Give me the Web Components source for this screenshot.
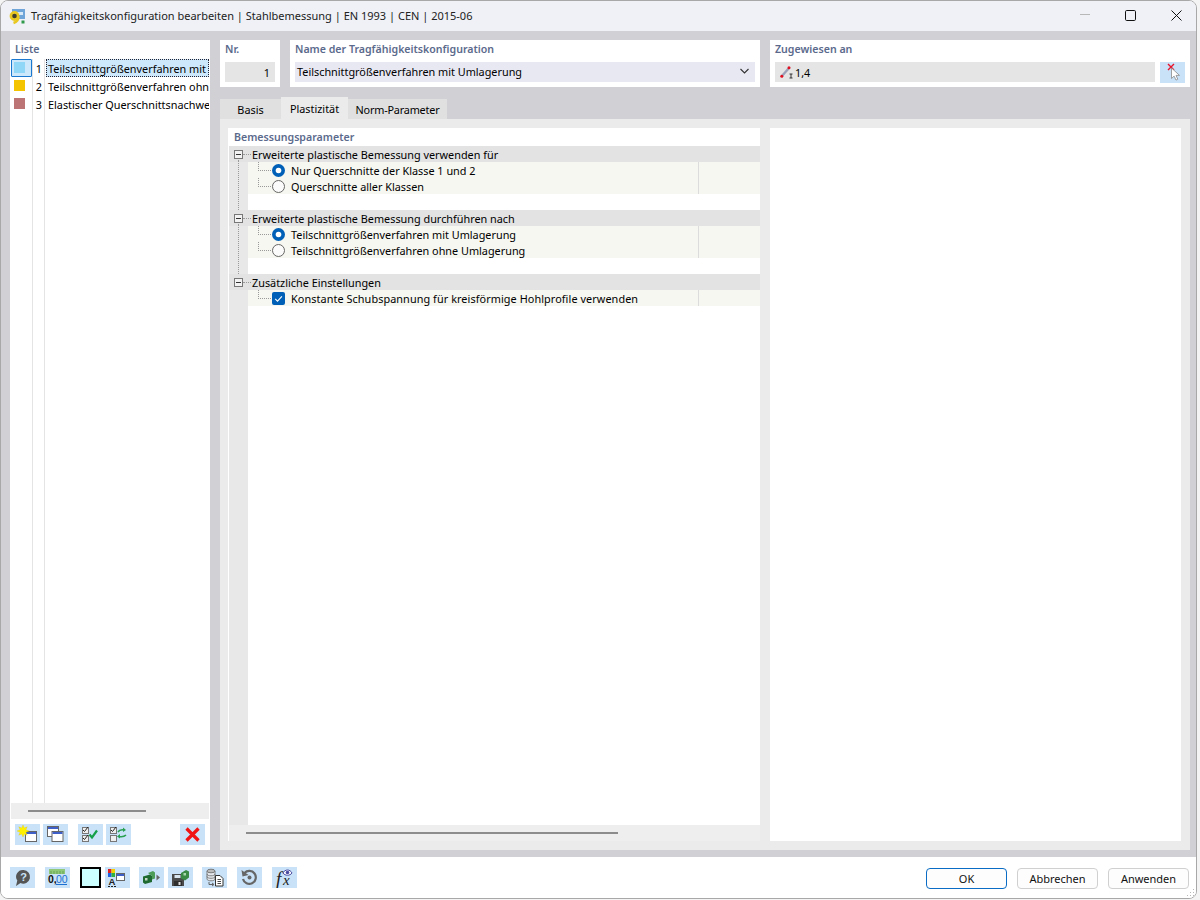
<!DOCTYPE html>
<html lang="de">
<head>
<meta charset="utf-8">
<title>Tragfähigkeitskonfiguration bearbeiten</title>
<style>
html, body { margin: 0; height: 100%; background: #f4f4f4; }
body { font: 10.85px "Noto Sans", "Open Sans", sans-serif; color: #000; }
</style>
</head>
<body>

<svg width="0" height="0" style="position:absolute">
  <defs>
    <g id="win"><rect x=".5" y=".5" width="11" height="10" fill="#fff" stroke="#666"/><rect x="1" y="1" width="10" height="2" fill="#3f5fc8"/></g>
    <g id="box"><rect x=".5" y=".5" width="6" height="6" fill="#eee" stroke="#777"/></g>
  </defs>
</svg>

<rs-dialog>
  <span slot="title">Tragfähigkeitskonfiguration bearbeiten | Stahlbemessung | EN 1993 | CEN | 2015-06</span>

  <rs-list-panel slot="list">
    <rs-list-row color="#8fd6f7" num="1" selected>Teilschnittgrößenverfahren mit Umlagerung</rs-list-row>
    <rs-list-row color="#f5c400" num="2">Teilschnittgrößenverfahren ohne Umlagerung</rs-list-row>
    <rs-list-row color="#bd7474" num="3">Elastischer Querschnittsnachweis</rs-list-row>

    <rs-icon-button slot="tools"><svg viewBox="0 0 25 21"><use href="#win" x="10" y="7"/><path d="M14 7L10.900 5.700L12.200 2.800L9.300 4L8 1L6.700 4L3.800 2.800L5.100 5.700L2 7L5.100 8.300L3.800 11.200L6.700 10L8 13L9.300 10L12.200 11.200L10.900 8.300Z" fill="#fff200" stroke="#e0c000" stroke-width=".3"/></svg></rs-icon-button>
    <rs-icon-button slot="tools"><svg viewBox="0 0 25 21"><use href="#win" x="4" y="2"/><use href="#win" x="8.500" y="7"/></svg></rs-icon-button>
    <rs-icon-button slot="tools" gap><svg viewBox="0 0 25 21"><use href="#box" x="4" y="3"/><use href="#box" x="4" y="11"/><path d="M5 6l1.500 1.500L10 3M5 14l1.500 1.500L10 11" fill="none" stroke="#222" stroke-width="1"/><path d="M11.500 10.500l2.500 3 5-7" fill="none" stroke="#17a04a" stroke-width="2.200"/></svg></rs-icon-button>
    <rs-icon-button slot="tools"><svg viewBox="0 0 25 21"><use href="#box" x="4" y="3"/><use href="#box" x="4" y="11"/><path d="M5 6l1.500 1.500L10 3" fill="none" stroke="#222" stroke-width="1"/><path d="M12 8c1.500-2.500 3.500-2.500 6-2M20 11c-2 2-4 2-7 1.500" fill="none" stroke="#28a050" stroke-width="1.600"/><path d="M17 3.500l3 2.500-3 2zM14 10l-3 2.500 3 2z" fill="#28a050"/></svg></rs-icon-button>
    <rs-icon-button slot="tools" push><svg viewBox="0 0 25 21"><path d="M6.500 4.500l12 12M18.500 4.500l-12 12" stroke="#f01414" stroke-width="3.200" fill="none"/></svg></rs-icon-button>
  </rs-list-panel>

  <rs-field slot="head" label="Nr." style="width:60px"><rs-input align="right">1</rs-input></rs-field>
  <rs-field slot="head" label="Name der Tragfähigkeitskonfiguration" style="width:470px"><rs-input tone="#e8e8f3" caret style="padding-bottom:2px">Teilschnittgrößenverfahren mit Umlagerung</rs-input></rs-field>
  <rs-field slot="head" label="Zugewiesen an" style="flex:1">
    <rs-input style="flex:1">
      <svg slot="icon" width="14" height="14" viewBox="0 0 14 14" style="margin-left:3px"><path d="M1.500 11.500L9 3" stroke="#9aa0b8" stroke-width="2.400"/><circle cx="1.800" cy="11.200" r="1.500" fill="#e01020"/><circle cx="9" cy="2.800" r="1.500" fill="#e01020"/><path d="M9.500 9h3M11 9v4M9.500 13h3" stroke="#222" stroke-width=".9"/></svg>
      1,4
    </rs-input>
    <rs-icon-button style="margin-left:5px"><svg viewBox="0 0 25 21"><path d="M8 2l6 6M14 2L8 8" stroke="#e8122a" stroke-width="1.400"/><path d="M11.500 6v10.500l2.600-2.400 1.900 4 1.800-.9-1.800-3.800h3.500z" fill="#fff" stroke="#8a8a8a" stroke-width=".8"/></svg></rs-icon-button>
  </rs-field>

  <rs-tabs slot="tabs">
    <rs-tab style="width:61px">Basis</rs-tab>
    <rs-tab style="width:67px" active>Plastizität</rs-tab>
    <rs-tab style="width:99px;letter-spacing:-.2px">Norm-Parameter</rs-tab>
  </rs-tabs>

  <rs-tree-pane slot="left" label="Bemessungsparameter">
    <rs-tree-group label="Erweiterte plastische Bemessung verwenden für" line>
      <rs-tree-row kind="radio" checked>Nur Querschnitte der Klasse 1 und 2</rs-tree-row>
      <rs-tree-row kind="radio" last>Querschnitte aller Klassen</rs-tree-row>
    </rs-tree-group>
    <rs-tree-group label="Erweiterte plastische Bemessung durchführen nach" line>
      <rs-tree-row kind="radio" checked>Teilschnittgrößenverfahren mit Umlagerung</rs-tree-row>
      <rs-tree-row kind="radio" last>Teilschnittgrößenverfahren ohne Umlagerung</rs-tree-row>
    </rs-tree-group>
    <rs-tree-group label="Zusätzliche Einstellungen">
      <rs-tree-row kind="check" checked last style="letter-spacing:.08px">Konstante Schubspannung für kreisförmige Hohlprofile verwenden</rs-tree-row>
    </rs-tree-group>
  </rs-tree-pane>

  <rs-icon-button slot="footer"><svg viewBox="0 0 25 21"><path d="M13.500 3a6.800 6.800 0 1 1-3 13l-4.500 3 1.300-5.400A6.800 6.800 0 0 1 13.500 3z" fill="#555"/><text x="13.500" y="14" font-family="Liberation Sans" font-weight="700" font-size="11" text-anchor="middle" fill="#c9e2f7">?</text></svg></rs-icon-button>
  <rs-icon-button slot="footer" style="margin-left:10px"><svg viewBox="0 0 25 21"><rect x="4" y="2" width="16" height="5" fill="#8fc878"/><path d="M6 4v3M9 4v3M12 4v3M15 4v3M18 4v3" stroke="#5d9a4c" stroke-width=".8"/><text x="3" y="16" font-family="Liberation Sans" font-size="10.500" font-weight="700" fill="#111">0,</text><text x="11" y="16" font-family="Liberation Sans" font-size="10.500" fill="#1a6fd0">00</text><path d="M11 17.500h11" stroke="#1a6fd0"/></svg></rs-icon-button>
  <rs-swatch slot="footer"></rs-swatch>
  <rs-icon-button slot="footer" style="margin-left:4px"><svg viewBox="0 0 25 21"><rect x="3" y="2" width="3.500" height="4" fill="#e02020"/><rect x="6.500" y="2" width="3.500" height="4" fill="#f0d000"/><rect x="3" y="6" width="3.500" height="4" fill="#2060e0"/><rect x="6.500" y="6" width="3.500" height="4" fill="#30b040"/><rect x="11.500" y="6.500" width="8" height="7" fill="#fff" stroke="#666"/><rect x="12" y="7" width="7" height="2" fill="#3f5fc8"/><text x="7" y="17.500" font-family="Liberation Sans" font-weight="700" font-size="9.500" text-anchor="middle" fill="#222">A</text><path d="M3 19.500h2M6 19.500h2M9 19.500h2" stroke="#222"/></svg></rs-icon-button>
  <rs-icon-button slot="footer" style="margin-left:9px"><svg viewBox="0 0 25 21"><path d="M4 9.500l7-2 2 1.500v6l-7 2-2-1.500z" fill="#1f6a30"/><path d="M9 6l5-2 2 1.500v6l-3 1V9l-2-1.500z" fill="#4d9c58"/><path d="M6 11h2.500v2.500H6z" fill="#c4d8c4"/><path d="M17.500 7.500l3.500 3-3.500 3z" fill="#666"/></svg></rs-icon-button>
  <rs-icon-button slot="footer" style="margin-left:4px"><svg viewBox="0 0 25 21"><path d="M4 7h12v12H4z" fill="#4a4a4a"/><rect x="6.500" y="8" width="6" height="3" fill="#d8e4ee"/><rect x="6" y="14" width="8" height="5" fill="#2e2e2e"/><rect x="10.500" y="15" width="2" height="3" fill="#ddd"/><path d="M13 6l5-3 3 1.500v6l-4 3-4-2z" fill="#3a8a46"/><path d="M15.500 6h2.500v2.500h-2.500z" fill="#a9d8ae"/></svg></rs-icon-button>
  <rs-icon-button slot="footer" style="margin-left:9px"><svg viewBox="0 0 25 21"><path d="M5 4v8c0 2.400 8 2.400 8 0V4" fill="#e4e8ec" stroke="#666" stroke-width=".8"/><ellipse cx="9" cy="4" rx="4" ry="1.800" fill="#bbb" stroke="#666" stroke-width=".8"/><path d="M5 7c0 2.400 8 2.400 8 0M5 9.500c0 2.400 8 2.400 8 0" fill="none" stroke="#666" stroke-width=".8"/><path d="M7 15v2.500h4M10 16l2 1.500-2 1.500" fill="none" stroke="#555" stroke-width=".9"/><path d="M13.500 8.500h4.500l3 3v7.500h-7.500z" fill="#fff" stroke="#333"/><path d="M15.500 12.500h3.500M15.500 14.500h3.500M15.500 16.500h3.500" stroke="#333" stroke-width=".9"/></svg></rs-icon-button>
  <rs-icon-button slot="footer" style="margin-left:10px"><svg viewBox="0 0 25 21"><path d="M7.500 6a6.500 6.500 0 1 1-1.500 6" fill="none" stroke="#666" stroke-width="2.200"/><path d="M4.500 3l1 6.500 6-1.500z" fill="#666"/><circle cx="12.500" cy="10.500" r="2" fill="#666"/></svg></rs-icon-button>
  <rs-icon-button slot="footer" style="margin-left:10px"><svg viewBox="0 0 25 21"><text x="4" y="18" font-family="Liberation Serif" font-style="italic" font-size="19" fill="#222">f</text><text x="11" y="18" font-family="Liberation Serif" font-style="italic" font-size="15" fill="#222">x</text><path d="M11 6c2-4 7-4 9 0-2 3-7 3-9 0z" fill="#fff" stroke="#4a4aa0"/><circle cx="15.500" cy="5.500" r="1.800" fill="#4a4aa0"/></svg></rs-icon-button>

  <rs-button slot="actions" primary>OK</rs-button>
  <rs-button slot="actions">Abbrechen</rs-button>
  <rs-button slot="actions">Anwenden</rs-button>
</rs-dialog>

<script>
// Small helper: every element gets an open shadow root from a markup string.
function define(name, markup, setup) {
  const template = document.createElement('template')
  template.innerHTML = markup
  customElements.define(name, class extends HTMLElement {
    constructor() {
      super()
      this.attachShadow({ mode: 'open' }).appendChild(template.content.cloneNode(true))
    }
    connectedCallback() {
      if (setup) setup(this, this.shadowRoot)
    }
  })
}

define('rs-dialog', `
<style>
:host { display: flex; flex-direction: column; width: 1197px; height: 899px; box-sizing: border-box;
  border: 1px solid #a8a8a8; border-radius: 8px; overflow: hidden; background: #fff; }
#bar { height: 30px; display: flex; align-items: center; background: #eff1f7; font-size: 11px; flex: none; }
#logo { margin: 0 5px 0 8px; flex: none; }
#title { flex: 1; color: #222; padding-bottom: 1px; }
.ctl { width: 46px; height: 30px; padding-bottom: 2px; box-sizing: border-box; display: flex; align-items: center; justify-content: center; flex: none; }
#main { flex: 1; min-height: 0; display: flex; gap: 10px; padding: 9px 6px 7px 9px; background: #d0d0d5; }
#right { flex: 1; min-width: 0; display: flex; flex-direction: column; }
#head { display: flex; gap: 10px; height: 47px; flex: none; margin-bottom: 10px; }
#sheet { flex: 1; min-height: 0; display: flex; gap: 10px; padding: 9px 9px 9px 8px; background: #ebebeb; }
#blank { width: 411px; background: #fff; flex: none; }
#foot { height: 41px; flex: none; display: flex; align-items: flex-start; padding: 0 7px 0 9px; background: #fff; position: relative; }
#tools { display: flex; align-items: center; margin-top: 10px; }
#actions { margin-left: auto; display: flex; gap: 10px; margin-top: 11px; }
#grip { position: absolute; right: 1px; bottom: 1px; }
</style>
<div id="bar">
  <svg id="logo" width="17" height="17" viewBox="0 0 17 17">
    <rect x="3" y="1" width="13" height="10" fill="#6fa4d8"/><rect x="8" y="4" width="6" height="3" fill="#d8e8f6"/>
    <circle cx="5.500" cy="8" r="3.600" fill="#3c3c30" stroke="#e8c820" stroke-width="2.600"/>
    <path d="M9.500 8.500c0 3.500-2 5.500-5 6.500" fill="none" stroke="#e8c820" stroke-width="2.600"/>
    <rect x="12.500" y="12.500" width="3" height="3" fill="#2f9a4a"/>
  </svg>
  <span id="title"><slot name="title"></slot></span>
  <div class="ctl" style="width:44px"><svg width="10" height="2"><rect width="10" height="1" fill="#b8b8b8"/></svg></div>
  <div class="ctl" style="margin-right:3px"><svg width="11" height="11"><rect x=".5" y=".5" width="10" height="10" rx="1.200" fill="none" stroke="#111"/></svg></div>
  <div class="ctl" style="width:40px"><svg width="11" height="11"><path d="M.5.500l10 10M10.500.500l-10 10" stroke="#111" fill="none"/></svg></div>
</div>
<div id="main">
  <slot name="list"></slot>
  <div id="right">
    <div id="head"><slot name="head"></slot></div>
    <slot name="tabs"></slot>
    <div id="sheet"><slot name="left"></slot><div id="blank"></div></div>
  </div>
</div>
<div id="foot">
  <div id="tools"><slot name="footer"></slot></div>
  <div id="actions"><slot name="actions"></slot></div>
  <svg id="grip" width="8" height="8" fill="#b8b8b8"><rect x="6" y="0" width="1" height="1"/><rect x="3" y="3" width="1" height="1"/><rect x="6" y="3" width="1" height="1"/><rect x="0" y="6" width="1" height="1"/><rect x="3" y="6" width="1" height="1"/><rect x="6" y="6" width="1" height="1"/></svg>
</div>
`)

define('rs-list-panel', `
<style>
:host { display: flex; flex-direction: column; width: 200px; flex: none; background: #fff; box-sizing: border-box; }
#label { height: 19px; line-height: 18px; padding-left: 5px; font-size: 10.6px; font-weight: 600; color: #5b6a8c; flex: none; }
#rows { flex: 1; min-height: 0; padding-left: 1px; padding-right: 1px;
  background: linear-gradient(90deg, transparent 22px, #e4e4e4 22px, #e4e4e4 23px, transparent 23px, transparent 34px, #e4e4e4 34px, #e4e4e4 35px, transparent 35px); }
#scroll { height: 16px; margin: 0 1px; background: #eee; flex: none; display: flex; align-items: center; }
#scroll i { display: block; width: 118px; height: 2px; background: #8c8c8c; margin-left: 17px; }
#tools { height: 31px; flex: none; display: flex; align-items: center; padding: 0 5px; }
::slotted(rs-icon-button) { margin-right: 3px; }
::slotted([gap]) { margin-left: 7px; }
::slotted([push]) { margin-left: auto; margin-right: 0; }
</style>
<div id="label">Liste</div>
<div id="rows"><slot></slot></div>
<div id="scroll"><i></i></div>
<div id="tools"><slot name="tools"></slot></div>
`)

define('rs-list-row', `
<style>
:host { display: flex; height: 18px; line-height: 19px; overflow: hidden; }
#mark { width: 21px; flex: none; box-sizing: border-box; display: flex; align-items: center; padding-left: 3px; margin-right: 1px; }
#mark i { display: block; width: 11px; height: 11px; margin-top: -1px; }
#num { width: 11px; flex: none; text-align: right; padding-right: 2px; box-sizing: border-box; margin-right: 1px; }
#text { flex: 1; min-width: 0; white-space: nowrap; overflow: hidden; padding-left: 2px; margin-left: 1px; }
:host([selected]) #mark { border: 1px solid #1a78d0; border-radius: 1px; padding-left: 2px; background: #cde8fb; }
:host([selected]) #text { background: #cde8fb; outline: 1px dotted #223; outline-offset: -1px; }
</style>
<div id="mark"><i></i></div><div id="num"></div><div id="text"><slot></slot></div>
`, (el, root) => {
  root.querySelector('i').style.background = el.getAttribute('color')
  root.getElementById('num').textContent = el.getAttribute('num')
})

define('rs-field', `
<style>
:host { display: block; background: #fff; padding: 0 5px; box-sizing: border-box; flex: none; }
#label { height: 22px; line-height: 18px; font-size: 10.6px; font-weight: 600; color: #5b6a8c; }
#body { display: flex; align-items: flex-start; }
::slotted(rs-input) { flex: 1; }
</style>
<div id="label"></div>
<div id="body"><slot></slot></div>
`, (el, root) => {
  root.getElementById('label').textContent = el.getAttribute('label')
})

define('rs-input', `
<style>
:host { display: flex; align-items: center; height: 20px; background: #e5e5e5; padding: 0 3px 0 2px; box-sizing: border-box; min-width: 0; white-space: nowrap; }
#text { flex: 1; display: flex; align-items: center; gap: 1px; }
:host([align=right]) #text { justify-content: flex-end; padding-right: 2px; }
#caret { display: none; margin-right: 3px; }
:host([caret]) #caret { display: block; }
</style>
<div id="text"><slot name="icon"></slot><span><slot></slot></span></div>
<svg id="caret" width="9" height="6"><path d="M.5 1l4 4 4-4" fill="none" stroke="#333" stroke-width="1.100"/></svg>
`, (el) => {
  if (el.hasAttribute('tone')) el.style.background = el.getAttribute('tone')
})

define('rs-tabs', `
<style>:host { display: flex; height: 22px; align-items: flex-end; flex: none; }</style>
<slot></slot>
`)

define('rs-tab', `
<style>
:host { display: flex; align-items: center; justify-content: center; height: 20px; background: #e0e0e0; white-space: nowrap; box-sizing: border-box; flex: none; }
:host([active]) { height: 22px; background: #ebebeb; }
</style>
<slot></slot>
`)

define('rs-tree-pane', `
<style>
:host { display: flex; flex-direction: column; flex: 1; min-width: 0; background: #fff; }
#label { height: 18px; line-height: 18px; padding-left: 6px; font-size: 10.6px; font-weight: 600; color: #5b6a8c; flex: none; }
#tree { flex: 1; min-height: 0; margin-left: 1px; background: linear-gradient(90deg, #e8e8e8 19px, #fff 19px); }
#scroll { height: 16px; margin-left: 1px; background: #eee; flex: none; display: flex; align-items: center; }
#scroll i { display: block; width: 372px; height: 2px; background: #8c8c8c; margin-left: 17px; }
</style>
<div id="label"></div>
<div id="tree"><slot></slot></div>
<div id="scroll"><i></i></div>
`, (el, root) => {
  root.getElementById('label').textContent = el.getAttribute('label')
})

define('rs-tree-group', `
<style>
:host { display: block; position: relative; padding-bottom: 16px; }
:host([line])::before { content: ""; position: absolute; left: 9px; top: 14px; bottom: -6px; border-left: 1px dotted #999; }
#head { height: 16px; line-height: 16px; background: #e3e3e3; display: flex; align-items: center; white-space: nowrap; }
#tog { width: 9px; height: 9px; margin-left: 5px; flex: none; }
#dots { width: 8px; height: 0; border-top: 1px dotted #999; flex: none; }
#text { margin: 2px 0 0 1px; }
</style>
<div id="head">
  <svg id="tog" viewBox="0 0 9 9"><rect x=".5" y=".5" width="8" height="8" fill="#f2f2f2" stroke="#777"/><path d="M2 4.500h5" stroke="#333"/></svg>
  <span id="dots"></span><span id="text"></span>
</div>
<slot></slot>
`, (el, root) => {
  root.getElementById('text').textContent = el.getAttribute('label')
})

const radioOn = '<svg width="13" height="13" viewBox="0 0 13 13"><circle cx="6.500" cy="6.500" r="6.500" fill="#0060b8"/><circle cx="6.500" cy="6.500" r="2.800" fill="#fff"/></svg>'
const radioOff = '<svg width="13" height="13" viewBox="0 0 13 13"><circle cx="6.500" cy="6.500" r="6" fill="#fbfbfb" stroke="#666"/></svg>'
const checkOn = '<svg width="13" height="13" viewBox="0 0 13 13"><rect width="13" height="13" rx="2" fill="#0060b8"/><path d="M3.200 6.800l2.300 2.300 4.400-4.800" fill="none" stroke="#fff" stroke-width="1.100"/></svg>'

define('rs-tree-row', `
<style>
:host { display: flex; height: 16px; margin-left: 19px; background: #f6f7f0; position: relative; white-space: nowrap; line-height: 18px; }
#branch { position: absolute; left: 10px; top: 0; height: 8px; width: 12px; border-left: 1px dotted #999; border-bottom: 1px dotted #999; }
#mark { position: absolute; left: 24px; top: 2px; width: 13px; height: 13px; }
#text { flex: 1; padding-left: 43px; min-width: 0; }
#value { width: 61px; flex: none; border-left: 1px solid #dcdcdc; }
svg { display: block; }
</style>
<span id="branch"></span><span id="mark"></span>
<div id="text"><slot></slot></div><div id="value"></div>
`, (el, root) => {
  const on = el.hasAttribute('checked')
  root.getElementById('mark').innerHTML = el.getAttribute('kind') === 'check' ? checkOn : (on ? radioOn : radioOff)
})

define('rs-icon-button', `
<style>
:host { display: block; width: 25px; height: 21px; background: #c9e2f7; flex: none; }
::slotted(svg) { display: block; width: 25px; height: 21px; }
</style>
<slot></slot>
`)

define('rs-swatch', `
<style>:host { display: block; width: 21px; height: 21px; box-sizing: border-box; background: #ccffff; border: 2px solid #000; margin-left: 10px; flex: none; }</style>
`)

define('rs-button', `
<style>
:host { display: flex; align-items: center; justify-content: center; width: 81px; height: 21px; box-sizing: border-box;
  border: 1px solid #d0d0d0; border-radius: 4px; background: #fdfdfd; font-size: 11px; color: #111; }
:host([primary]) { border-color: #0a6cc4; }
</style>
<slot></slot>
`)
</script>
</body>
</html>
